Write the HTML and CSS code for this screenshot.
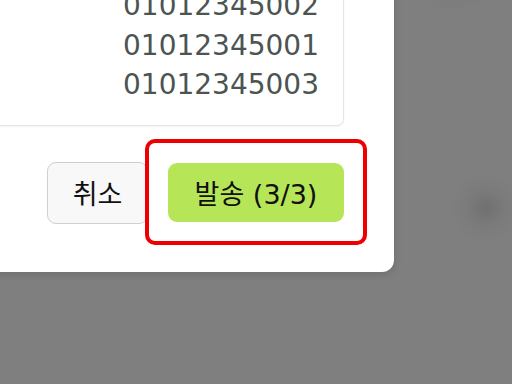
FILE: index.html
```html
<!DOCTYPE html>
<html lang="ko">
<head>
    <meta charset="UTF-8">
    <meta name="viewport" content="width=device-width, initial-scale=1.0">
    <title>발송 확인</title>
    <link rel="stylesheet" href="styles.css">
</head>
<body>
    <div class="backdrop">
        <div class="modal">
            <div class="number-list">
                <div class="number">01012345002</div>
                <div class="number">01012345001</div>
                <div class="number">01012345003</div>
            </div>

            <div class="actions">
                <button class="btn btn-cancel">취소</button>
                <div class="highlight">
                    <button class="btn btn-send">발송 (3/3)</button>
                </div>
            </div>
        </div>
    </div>
</body>
</html>
```

FILE: styles.css
```css
html, body {
    margin: 0;
    padding: 0;
    width: 512px;
    height: 384px;
    overflow: hidden;
}

body {
    font-family: "DejaVu Sans", "Noto Sans CJK KR", sans-serif;
    background-color: #7f7f7f;
}

.backdrop {
    width: 512px;
    height: 384px;
    background:
        radial-gradient(circle at 486px 256px, rgba(100, 100, 100, 0.55) 0, rgba(115, 115, 115, 0.3) 20px, rgba(127, 127, 127, 0) 36px),
        radial-gradient(ellipse at 455px 25px, rgba(110, 110, 110, 0.35) 0, rgba(115, 115, 115, 0) 45px),
        #7f7f7f;
}

.modal {
    margin-left: -120px;
    padding: 0 50px 48px 70px;
    box-sizing: border-box;
    width: 514px;
    background-color: #fff;
    border-radius: 0 0 12px 12px;
    box-shadow: 0 2px 8px rgba(0, 0, 0, 0.15);
}

.number-list {
    margin-top: -48px;
    padding: 34px 24px 20px 0;
    border: 1px solid #e4e6e5;
    border-top: none;
    border-radius: 0 0 7px 7px;
    text-align: right;
    box-shadow: 0 1px 2px rgba(0, 0, 0, 0.05);
}

.number {
    font-size: 28px;
    line-height: 39.5px;
    color: #4b5451;
}

.actions {
    display: flex;
    justify-content: flex-end;
    align-items: center;
    gap: 20px;
    margin-top: 36px;
}

.btn {
    font-family: "DejaVu Sans", "Noto Sans CJK KR", sans-serif;
    font-size: 27px;
    color: #111;
    border-radius: 9px;
    cursor: pointer;
    padding: 0;
}

.btn-cancel {
    width: 101px;
    height: 62px;
    background-color: #f7f8f7;
    border: 1.5px solid #cdd0ce;
}

.highlight {
    position: relative;
    display: flex;
}

.highlight::after {
    content: "";
    position: absolute;
    top: -24px;
    right: -23px;
    bottom: -23px;
    left: -23px;
    border: 4.5px solid #ee0000;
    border-radius: 10px;
    pointer-events: none;
}

.btn-send {
    width: 176px;
    height: 59px;
    background-color: #b6e558;
    border: none;
}
```
